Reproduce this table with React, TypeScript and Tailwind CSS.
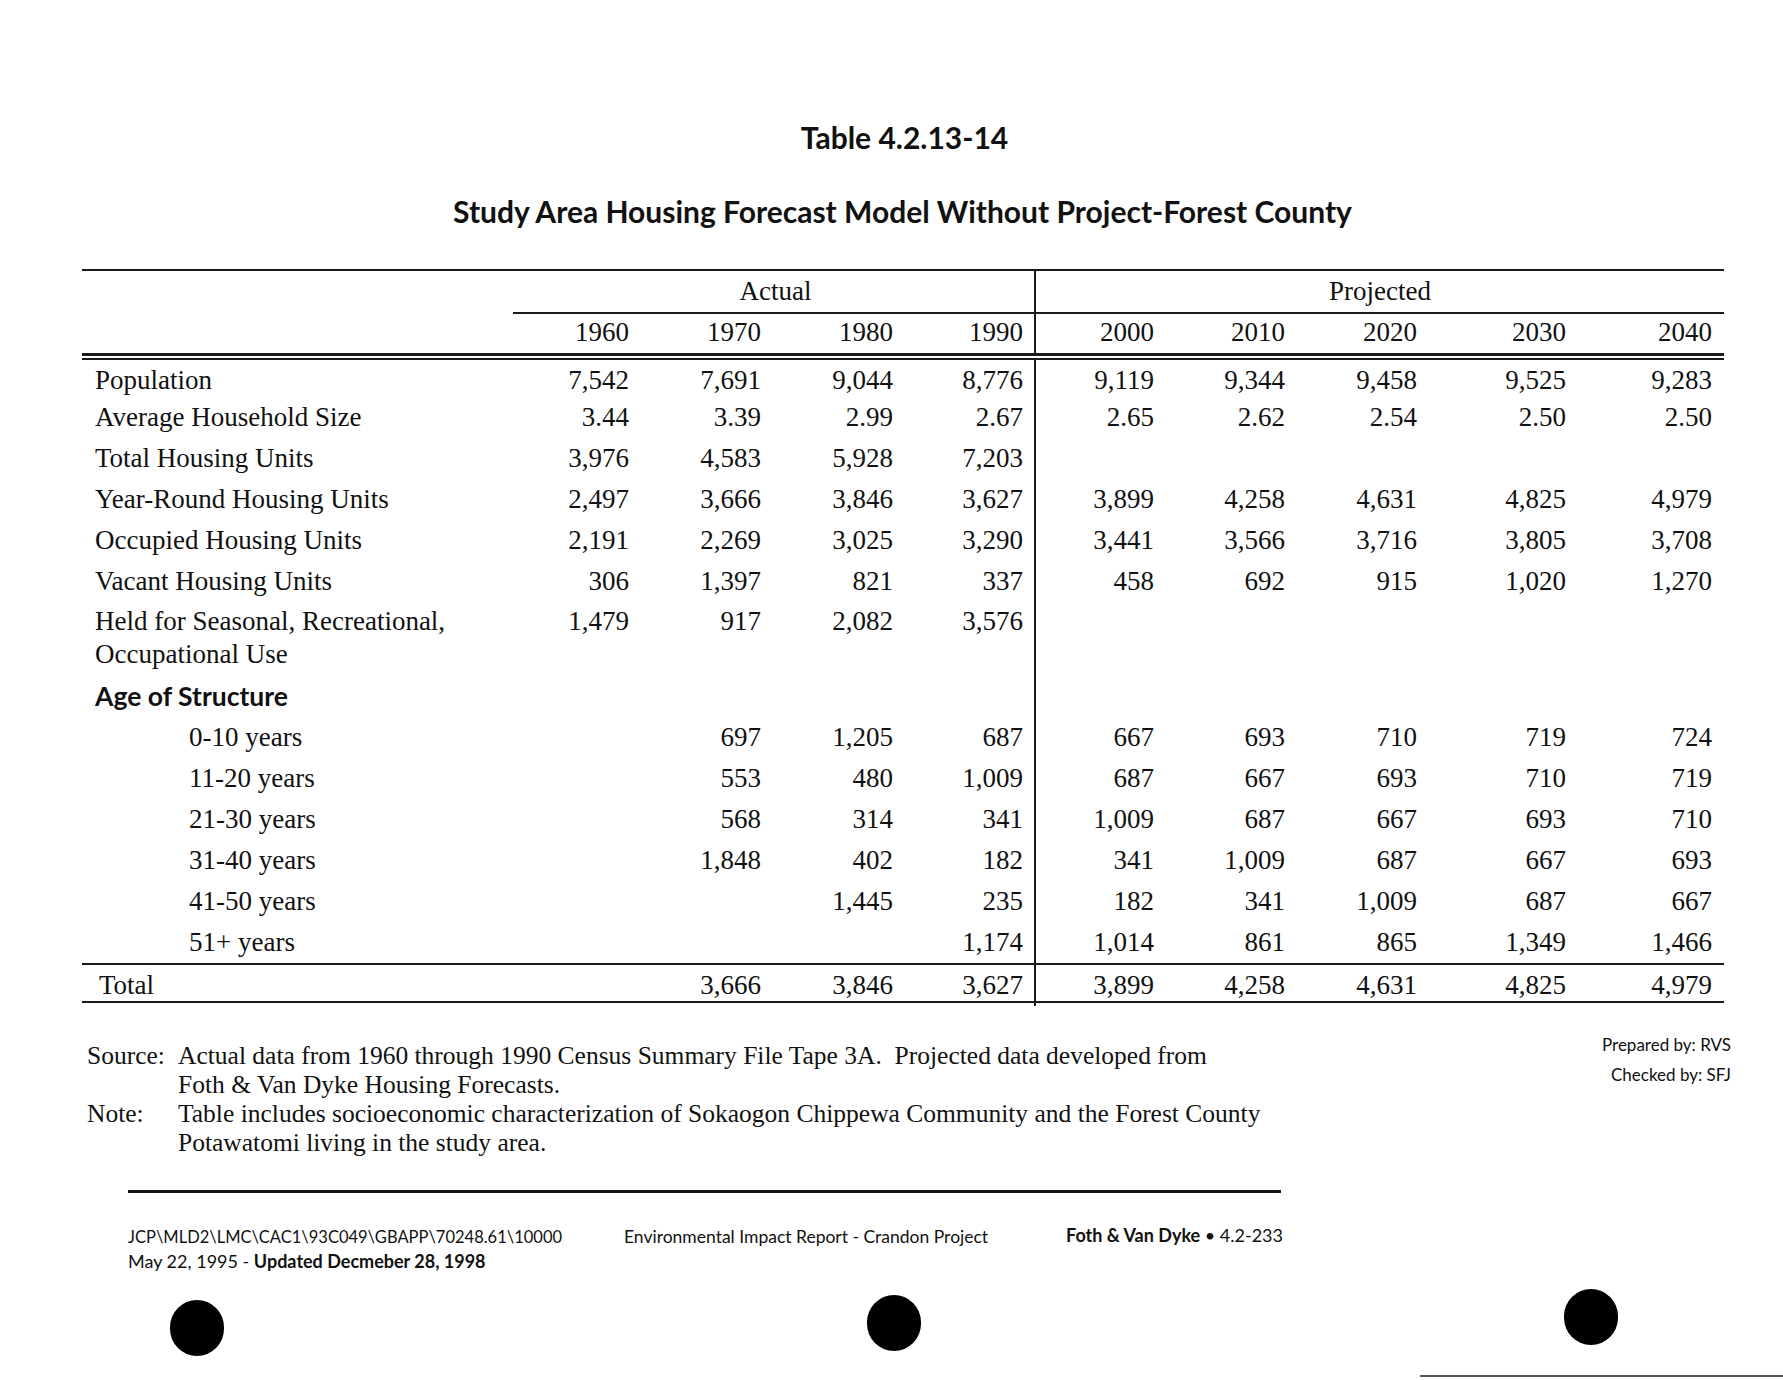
const cols = "grid grid-cols-[429px_128px_132px_132px_131px_130px_131px_132px_149px_148px]";

const pads = ["pr-[10px]", "pr-[10px]", "pr-[10px]", "pr-[11px]", "pr-[10px]", "pr-[10px]", "pr-[10px]", "pr-[10px]", "pr-[12px]"];

type Row = { label: string; values: string[]; sub?: boolean };

const topRows: Row[] = [
  { label: "Average Household Size", values: ["3.44", "3.39", "2.99", "2.67", "2.65", "2.62", "2.54", "2.50", "2.50"] },
  { label: "Total Housing Units", values: ["3,976", "4,583", "5,928", "7,203", "", "", "", "", ""] },
  { label: "Year-Round Housing Units", values: ["2,497", "3,666", "3,846", "3,627", "3,899", "4,258", "4,631", "4,825", "4,979"] },
  { label: "Occupied Housing Units", values: ["2,191", "2,269", "3,025", "3,290", "3,441", "3,566", "3,716", "3,805", "3,708"] },
  { label: "Vacant Housing Units", values: ["306", "1,397", "821", "337", "458", "692", "915", "1,020", "1,270"] },
];

const ageRows: Row[] = [
  { label: "0-10 years", values: ["", "697", "1,205", "687", "667", "693", "710", "719", "724"] },
  { label: "11-20 years", values: ["", "553", "480", "1,009", "687", "667", "693", "710", "719"] },
  { label: "21-30 years", values: ["", "568", "314", "341", "1,009", "687", "667", "693", "710"] },
  { label: "31-40 years", values: ["", "1,848", "402", "182", "341", "1,009", "687", "667", "693"] },
  { label: "41-50 years", values: ["", "", "1,445", "235", "182", "341", "1,009", "687", "667"] },
  { label: "51+ years", values: ["", "", "", "1,174", "1,014", "861", "865", "1,349", "1,466"] },
];

const years = ["1960", "1970", "1980", "1990", "2000", "2010", "2020", "2030", "2040"];
const population = ["7,542", "7,691", "9,044", "8,776", "9,119", "9,344", "9,458", "9,525", "9,283"];
const totals = ["", "3,666", "3,846", "3,627", "3,899", "4,258", "4,631", "4,825", "4,979"];

function Cells({ values, extra = "" }: { values: string[]; extra?: string }) {
  return (
    <>
      {values.map((v, i) => (
        <div
          key={i}
          className={`${pads[i]} ${extra} text-right ${i === 4 ? "border-l-2 border-[#1a1a1a]" : ""}`}
        >
          {v}
        </div>
      ))}
    </>
  );
}

function DataRow({ row }: { row: Row }) {
  return (
    <div className={`${cols} h-[41px] items-center`}>
      <div className={row.sub ? "pl-[107px]" : "pl-[13px]"}>{row.label}</div>
      <Cells values={row.values} extra="h-full flex items-center justify-end" />
    </div>
  );
}

export default function App() {
  return (
    <div className="w-[1783px] h-[1380px] bg-white overflow-hidden text-[#111] font-['Liberation_Serif',serif]">
      <div className="pt-[119px] pl-[26px] flex justify-center font-['Lato',sans-serif] font-bold text-[30px] leading-[36px]">
        Table 4.2.13-14
      </div>
      <div className="mt-[38px] pl-[22px] flex justify-center font-['Lato',sans-serif] font-bold text-[30px] leading-[36px]">
        Study Area Housing Forecast Model Without Project-Forest County
      </div>

      <div className="mt-[40px] ml-[82px] w-[1642px] border-t-2 border-[#1a1a1a] text-[27px]">
        <div className={`${cols} h-[38px]`}>
          <div />
          <div className="col-span-4 ml-[2px] border-b-2 border-[#1a1a1a] flex items-center justify-center pl-[4px]">
            Actual
          </div>
          <div className="col-span-5 border-l-2 border-b-2 border-[#1a1a1a] flex items-center justify-center">
            Projected
          </div>
        </div>
        <div className={`${cols} h-[44px]`}>
          <div />
          <Cells values={years} extra="h-full flex items-center justify-end pt-[2px]" />
        </div>
        <div className="h-[3px] bg-[#1a1a1a]" />
        <div className={`${cols} h-[4px]`}>
          <div className="col-span-5 h-[2px] mt-[2px] bg-[#1a1a1a]" />
          <div className="col-span-5 h-[2px] mt-[2px] bg-[#1a1a1a]" />
        </div>

        <div className={`${cols} h-[37px] items-center`}>
          <div className="pl-[13px]">Population</div>
          <Cells values={population} extra="h-full flex items-center justify-end" />
        </div>

        {topRows.map((r) => (
          <DataRow key={r.label} row={r} />
        ))}

        <div className={`${cols} h-[74px]`}>
          <div className="pl-[13px] pt-[3px] leading-[33px]">
            Held for Seasonal, Recreational,
            <br />
            Occupational Use
          </div>
          <Cells values={["1,479", "917", "2,082", "3,576", "", "", "", "", ""]} extra="pt-[3px] leading-[33px]" />
        </div>

        <div className={`${cols} h-[41px] items-center`}>
          <div className="pl-[13px] font-['Lato',sans-serif] font-bold text-[26.5px]">Age of Structure</div>
          <Cells values={["", "", "", "", "", "", "", "", ""]} extra="h-full" />
        </div>

        {ageRows.map((r) => (
          <DataRow key={r.label} row={{ ...r, sub: true }} />
        ))}

        <div className={`${cols} h-[40px] items-center border-t-2 border-b-2 border-[#1a1a1a]`}>
          <div className="pl-[17px]">Total</div>
          <Cells values={totals} extra="h-full flex items-center justify-end" />
        </div>
      </div>

      <div className="mt-[27px] pl-[87px] pr-[52px] flex justify-between items-start">
        <div className="pt-[11px] text-[25.5px] leading-[29px]">
          <div className="flex">
            <div className="w-[91px] shrink-0">Source:</div>
            <div>
              <div>Actual data from 1960 through 1990 Census Summary File Tape 3A.&nbsp; Projected data developed from</div>
              <div>Foth &amp; Van Dyke Housing Forecasts.</div>
            </div>
          </div>
          <div className="flex">
            <div className="w-[91px] shrink-0">Note:</div>
            <div>
              <div>Table includes socioeconomic characterization of Sokaogon Chippewa Community and the Forest County</div>
              <div>Potawatomi living in the study area.</div>
            </div>
          </div>
        </div>
        <div className="text-right font-['Lato',sans-serif] text-[17px] leading-[30px]">
          <div>Prepared by: RVS</div>
          <div>Checked by: SFJ</div>
        </div>
      </div>

      <div className="mt-[33px] ml-[128px] w-[1153px] h-[3px] bg-[#111]" />

      <div className="mt-[32px] ml-[128px] flex font-['Lato',sans-serif] leading-[24px]">
        <div className="w-[496px]">
          <div className="text-[16.5px]">JCP\MLD2\LMC\CAC1\93C049\GBAPP\70248.61\10000</div>
          <div className="text-[18px]">
            May 22, 1995 - <span className="font-bold">Updated Decmeber 28, 1998</span>
          </div>
        </div>
        <div className="w-[442px] text-[17.5px]">Environmental Impact Report - Crandon Project</div>
        <div className="-mt-[2px] text-[18px]">
          <span className="font-bold">Foth &amp; Van Dyke</span> • 4.2-233
        </div>
      </div>

      <div className="mt-[27px] ml-[170px] flex items-start gap-[643px]">
        <div className="w-[54px] h-[56px] rounded-full bg-black" />
        <div className="w-[54px] h-[56px] -mt-[5px] rounded-full bg-black" />
        <div className="w-[54px] h-[56px] -mt-[11px] rounded-full bg-black" />
      </div>

      <div className="mt-[19px] ml-[1420px] w-[363px] h-[2px] bg-[#555]" />
    </div>
  );
}
